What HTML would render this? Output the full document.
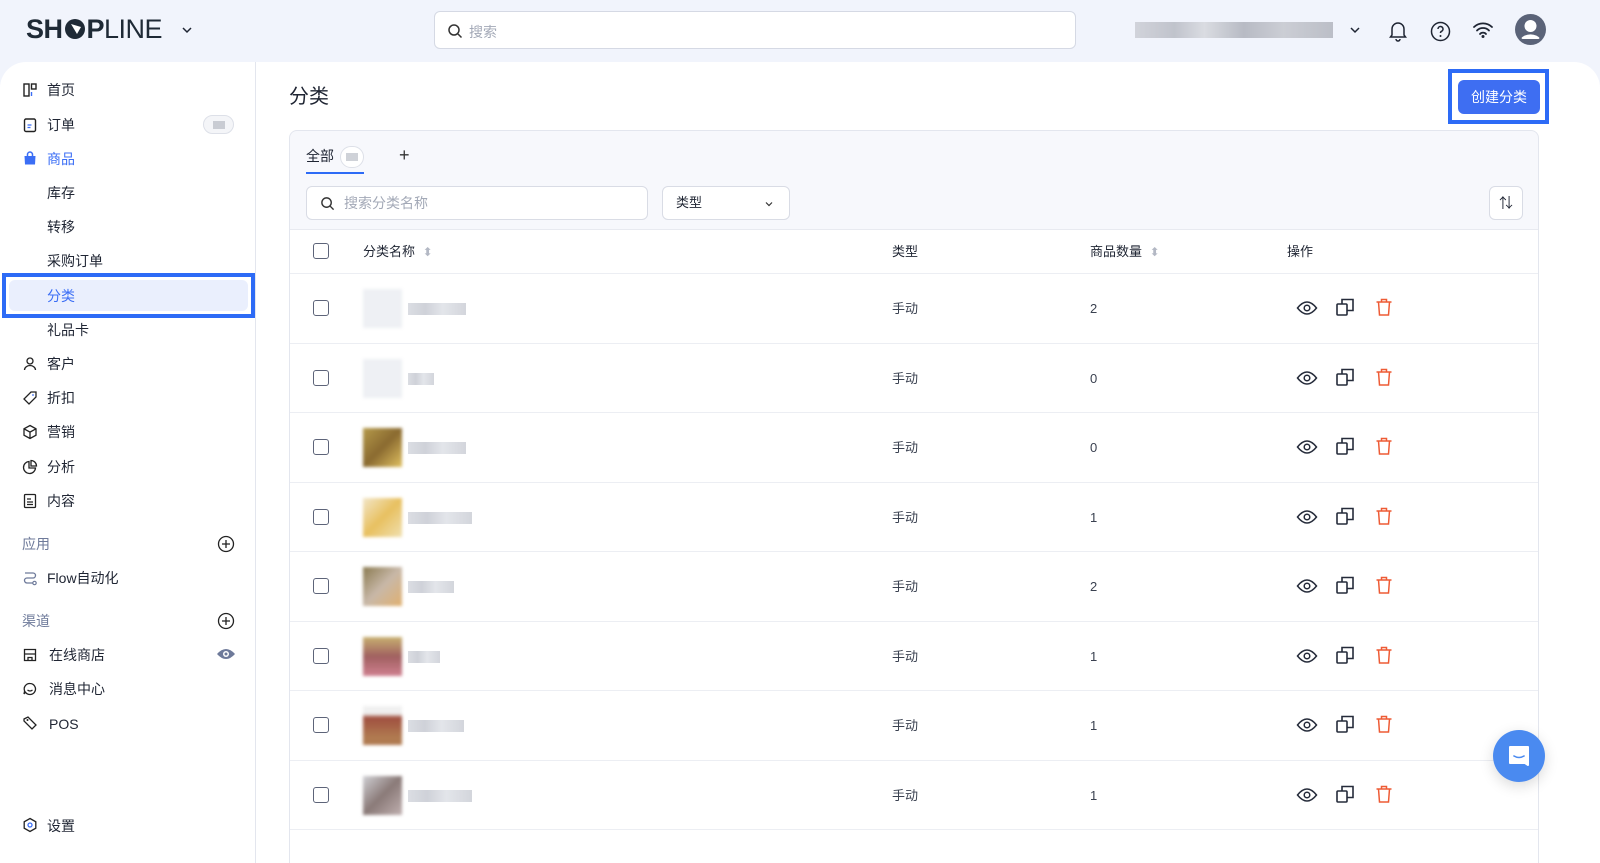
<!DOCTYPE html>
<html><head><meta charset="utf-8"><style>
*{box-sizing:border-box;margin:0;padding:0}
html,body{width:1600px;height:863px;overflow:hidden}
body{background:#f1f4fc;font-family:"Liberation Sans","Noto Sans CJK SC",sans-serif;color:#1f2533;position:relative}
.abs{position:absolute}
.logo{left:26px;top:14px;font-size:27px;font-weight:bold;letter-spacing:-0.5px;color:#1f2a36}
.logo span{font-weight:normal}
.search{left:434px;top:11px;width:642px;height:38px;border:1px solid #d5d9e4;border-radius:6px;background:#fff}
.search .ph{position:absolute;left:34px;top:10px;font-size:14px;color:#a3a9b7}
.panel{left:0;top:62px;width:1600px;height:801px;background:#fff;border-radius:26px 26px 0 0}
.side{left:0;top:62px;width:256px;height:801px;border-right:1px solid #e3e6ee}
.nav{position:absolute;left:47px;font-size:14px;color:#1f2533;line-height:18px}
.ico{position:absolute;left:22px;width:16px;height:16px}
.sec{position:absolute;left:22px;font-size:14px;color:#6e7a9a;line-height:18px}
.card{left:289px;top:130px;width:1250px;height:733px;background:#f7f8fc;border:1px solid #e3e6ee;border-bottom:none;border-radius:8px 8px 0 0;overflow:hidden}
.tbl{position:absolute;left:0;top:98px;width:1250px;height:635px;background:#fff;border-top:1px solid #e8eaf0}
.row{position:absolute;left:0;width:1250px;border-bottom:1px solid #eceef3}
.cb{position:absolute;left:23px;width:16px;height:16px;border:1.5px solid #5d6479;border-radius:3px;background:#fff}
.cell{position:absolute;font-size:13px;color:#3a4150;line-height:16px}
.blur{position:absolute;height:12px;background:linear-gradient(90deg,#d2d5dc,#c3c6cf 30%,#dcdfe5 60%,#c8cbd3);opacity:.8}
.th{position:absolute;left:73px;width:39px;height:39px;filter:blur(1.5px)}
</style></head><body>
<div class="abs logo">SH<svg width="24" height="22" viewBox="0 0 24 22" style="vertical-align:-2px"><circle cx="12" cy="11" r="10" fill="#1f2a36"/><path d="M8 6 L14 16 L18 9 Z" fill="#fff"/></svg>P<span>LINE</span></div>
<svg class="abs" style="left:181px;top:24px" width="12" height="12" viewBox="0 0 12 12"><path d="M2 4l4 4 4-4" stroke="#1f2533" stroke-width="1.5" fill="none"/></svg>
<div class="abs search"><svg style="position:absolute;left:12px;top:11px" width="16" height="16" viewBox="0 0 16 16"><circle cx="7" cy="7" r="5" stroke="#333" stroke-width="1.5" fill="none"/><path d="M11 11l3.5 3.5" stroke="#333" stroke-width="1.5"/></svg><div class="ph">搜索</div></div>
<div class="blur" style="left:1135px;top:22px;width:198px;height:16px;background:linear-gradient(90deg,#c9cbd2,#b4b7c0 20%,#d4d6db 35%,#a9acb6 55%,#c2c4cb 75%,#aeb1ba)"></div>
<svg class="abs" style="left:1349px;top:24px" width="12" height="12" viewBox="0 0 12 12"><path d="M2 4l4 4 4-4" stroke="#1f2533" stroke-width="1.5" fill="none"/></svg>
<svg class="abs" style="left:1388px;top:20px" width="20" height="22" viewBox="0 0 20 22"><path d="M4 15V9a6 6 0 0 1 12 0v6l1.5 2h-15z M8 19a2 2 0 0 0 4 0" stroke="#1f2533" stroke-width="1.5" fill="none"/></svg>
<svg class="abs" style="left:1430px;top:21px" width="21" height="21" viewBox="0 0 21 21"><circle cx="10.5" cy="10.5" r="9" stroke="#1f2533" stroke-width="1.5" fill="none"/><path d="M8 8a2.5 2.5 0 1 1 3.5 2.3c-.8.4-1 .9-1 1.7" stroke="#1f2533" stroke-width="1.5" fill="none"/><circle cx="10.5" cy="15" r="1" fill="#1f2533"/></svg>
<svg class="abs" style="left:1472px;top:21px" width="22" height="18" viewBox="0 0 22 18"><path d="M2 6a13 13 0 0 1 18 0M5 9.5a8.5 8.5 0 0 1 12 0M8 13a4 4 0 0 1 6 0" stroke="#1f2533" stroke-width="1.8" fill="none" stroke-linecap="round"/><circle cx="11" cy="15.5" r="1.5" fill="#1f2533"/></svg>
<svg class="abs" style="left:1515px;top:14px" width="31" height="31" viewBox="0 0 31 31"><circle cx="15.5" cy="15.5" r="15.5" fill="#5b6378"/><circle cx="15.5" cy="12" r="6" fill="#fff"/><path d="M5.5 25a11 8 0 0 1 20 0" fill="#fff"/><circle cx="15.5" cy="15.5" r="13.5" stroke="#5b6378" stroke-width="2" fill="none"/></svg>

<div class="abs panel"></div>
<div class="abs side"></div>
<svg class="ico" style="top:82px" viewBox="0 0 16 16"><rect x="2" y="2" width="5" height="12" stroke="#222" stroke-width="1.4" fill="none"/><rect x="9.5" y="2" width="4.5" height="5" stroke="#222" stroke-width="1.4" fill="none"/><path d="M9.5 10v4" stroke="#3b6ef5" stroke-width="1.4"/></svg><div class="nav" style="top:81px">首页</div>
<svg class="ico" style="top:117px" viewBox="0 0 16 16"><rect x="2.5" y="2" width="11" height="12.5" rx="1.5" stroke="#222" stroke-width="1.4" fill="none"/><path d="M5.5 8h4M5.5 10.5h3" stroke="#3b6ef5" stroke-width="1.3"/></svg><div class="nav" style="top:116px">订单</div>
<div class="abs" style="left:203px;top:115px;width:31px;height:19px;border:1px solid #dde0e8;border-radius:10px;background:#f4f5f8"><div style="margin:5px 9px;width:12px;height:8px;background:#c9ccd3"></div></div>
<svg class="ico" style="top:150px" viewBox="0 0 16 16"><path d="M2.5 6h11l-.5 8.5h-10z" fill="#3b6ef5"/><path d="M5.5 6V4.5a2.5 2.5 0 0 1 5 0V6" stroke="#3b6ef5" stroke-width="1.5" fill="none"/></svg><div class="nav" style="top:150px;color:#3b6ef5">商品</div>
<div class="nav" style="top:184px">库存</div>
<div class="nav" style="top:218px">转移</div>
<div class="nav" style="top:252px">采购订单</div>
<div class="abs" style="left:2px;top:273px;width:253px;height:45px;border:4px solid #2d6bf6;background:#fff"><div style="margin:3px;height:31px;background:#eaeffd;border-radius:6px"></div></div>
<div class="nav" style="top:287px;color:#3b6ef5">分类</div>
<div class="nav" style="top:321px">礼品卡</div>
<svg class="ico" style="top:356px" viewBox="0 0 16 16"><circle cx="8" cy="5" r="3" stroke="#222" stroke-width="1.3" fill="none"/><path d="M2.5 14a5.5 4.5 0 0 1 11 0" stroke="#222" stroke-width="1.3" fill="none"/></svg><div class="nav" style="top:355px">客户</div>
<svg class="ico" style="top:390px" viewBox="0 0 16 16"><path d="M9 2h5v5l-7 7-5-5z" stroke="#222" stroke-width="1.3" fill="none"/><circle cx="11" cy="5" r=".9" fill="#3b6ef5"/></svg><div class="nav" style="top:389px">折扣</div>
<svg class="ico" style="top:424px" viewBox="0 0 16 16"><path d="M8 1.5l6 3.3v6.4L8 14.5 2 11.2V4.8z M2 4.8l6 3.3 6-3.3M8 8.1v6.4" stroke="#222" stroke-width="1.3" fill="none"/></svg><div class="nav" style="top:423px">营销</div>
<svg class="ico" style="top:459px" viewBox="0 0 16 16"><path d="M7 2.5a6 6 0 1 0 6.5 6.5H7z" stroke="#222" stroke-width="1.3" fill="none"/><path d="M9 1.5a5.5 5.5 0 0 1 5.5 5.5H9z" stroke="#222" stroke-width="1.3" fill="none"/></svg><div class="nav" style="top:458px">分析</div>
<svg class="ico" style="top:493px" viewBox="0 0 16 16"><rect x="2.5" y="1.5" width="11" height="13" rx="1" stroke="#222" stroke-width="1.3" fill="none"/><path d="M5 6h4M5 9h6M5 11.5h6" stroke="#222" stroke-width="1.2"/></svg><div class="nav" style="top:492px">内容</div>
<div class="sec" style="top:535px">应用</div>
<svg class="abs" style="left:217px;top:535px" width="18" height="18" viewBox="0 0 18 18"><circle cx="9" cy="9" r="7.5" stroke="#222" stroke-width="1.3" fill="none"/><path d="M9 5v8M5 9h8" stroke="#222" stroke-width="1.3"/></svg>
<svg class="ico" style="top:570px" viewBox="0 0 16 16"><path d="M3 3h8a2.5 2.5 0 0 1 0 5H5a2.5 2.5 0 0 0 0 5h6" stroke="#6e7a9a" stroke-width="1.3" fill="none"/><circle cx="12.5" cy="13" r="1.7" stroke="#6e7a9a" stroke-width="1.2" fill="none"/></svg><div class="nav" style="top:569px">Flow自动化</div>
<div class="sec" style="top:612px">渠道</div>
<svg class="abs" style="left:217px;top:612px" width="18" height="18" viewBox="0 0 18 18"><circle cx="9" cy="9" r="7.5" stroke="#222" stroke-width="1.3" fill="none"/><path d="M9 5v8M5 9h8" stroke="#222" stroke-width="1.3"/></svg>
<svg class="ico" style="top:647px" viewBox="0 0 16 16"><path d="M2.5 2.5h11v11h-11zM2.5 7h11M6 13.5v-3h4v3" stroke="#222" stroke-width="1.3" fill="none"/></svg><div class="nav" style="top:646px;left:49px">在线商店</div>
<svg class="abs" style="left:216px;top:647px" width="20" height="14" viewBox="0 0 20 14"><path d="M1 7q9-10 18 0q-9 10-18 0z" fill="#6e7a9a"/><circle cx="10" cy="7" r="3" fill="#fff"/><circle cx="10" cy="7" r="1.5" fill="#6e7a9a"/></svg>
<svg class="ico" style="top:681px" viewBox="0 0 16 16"><path d="M8 2.5a5.5 5.5 0 1 1-4.5 8.7L2 13l.6-3A5.5 5.5 0 0 1 8 2.5z" stroke="#222" stroke-width="1.3" fill="none"/><path d="M5.5 9q2.5 2 5 0" stroke="#222" stroke-width="1.2" fill="none"/></svg><div class="nav" style="top:680px;left:49px">消息中心</div>
<svg class="ico" style="top:715px" viewBox="0 0 16 16"><path d="M2 4l4-2 8 8-4 4-8-8z" stroke="#222" stroke-width="1.3" fill="none"/><circle cx="5.5" cy="5" r="1" fill="#222"/></svg><div class="nav" style="top:715px;left:49px">POS</div>
<svg class="ico" style="top:817px" viewBox="0 0 16 16"><path d="M8 1.5l5.8 3.3v6.4L8 14.5 2.2 11.2V4.8z" stroke="#222" stroke-width="1.3" fill="none"/><circle cx="8" cy="8" r="2" stroke="#3b6ef5" stroke-width="1.3" fill="none"/></svg><div class="nav" style="top:817px">设置</div>

<div class="abs" style="left:289px;top:84px;font-size:20px;line-height:26px">分类</div>
<div class="abs" style="left:1448px;top:69px;width:101px;height:55px;border:4px solid #2d6bf6;background:#fff"></div>
<div class="abs" style="left:1458px;top:80px;width:82px;height:34px;background:#3e6ef2;border-radius:6px;color:#fff;font-size:14px;text-align:center;line-height:34px">创建分类</div>

<div class="abs card">
 <div style="position:absolute;left:16px;top:16px;font-size:14px;line-height:18px">全部</div>
 <div style="position:absolute;left:50px;top:15px;width:24px;height:22px;border:1px solid #dde0e8;border-radius:11px;background:#fff"><div style="margin:6px 5px;width:12px;height:8px;background:#cfd2d8"></div></div>
 <div style="position:absolute;left:16px;top:41px;width:58px;height:2px;background:#2d6bf6"></div>
 <div style="position:absolute;left:109px;top:13px;font-size:18px;color:#333;line-height:22px">+</div>
 <div style="position:absolute;left:16px;top:55px;width:342px;height:34px;border:1px solid #d9dce5;border-radius:6px;background:#fff"><svg style="position:absolute;left:13px;top:9px" width="15" height="15" viewBox="0 0 16 16"><circle cx="7" cy="7" r="5" stroke="#333" stroke-width="1.5" fill="none"/><path d="M11 11l3.5 3.5" stroke="#333" stroke-width="1.5"/></svg><span style="position:absolute;left:37px;top:7px;font-size:14px;color:#a3a9b7;line-height:18px">搜索分类名称</span></div>
 <div style="position:absolute;left:372px;top:55px;width:128px;height:34px;border:1px solid #d9dce5;border-radius:6px;background:#fff"><span style="position:absolute;left:13px;top:8px;font-size:13px;line-height:16px">类型</span><svg style="position:absolute;left:101px;top:12px" width="10" height="10" viewBox="0 0 10 10"><path d="M2 3.5l3 3 3-3" stroke="#333" stroke-width="1.2" fill="none"/></svg></div>
 <div style="position:absolute;left:1199px;top:55px;width:34px;height:34px;border:1px solid #d9dce5;border-radius:6px;background:#fff;font-size:14px;text-align:center;line-height:32px">⇅</div>
 <div class="tbl">
  <div class="row" style="top:0;height:44px"><div class="cb" style="top:13px"></div><div class="cell" style="left:73px;top:14px;color:#1f2533">分类名称 <span style="color:#b3b8c4;font-size:12px;margin-left:4px">⬍</span></div><div class="cell" style="left:602px;top:14px;color:#1f2533">类型</div><div class="cell" style="left:800px;top:14px;color:#1f2533">商品数量 <span style="color:#b3b8c4;font-size:12px;margin-left:4px">⬍</span></div><div class="cell" style="left:997px;top:14px;color:#1f2533">操作</div></div>
  ROWS
 </div>
</div>
<div class="abs" style="left:1493px;top:730px;width:52px;height:52px;border-radius:50%;background:#4a8af0;box-shadow:0 4px 14px rgba(0,0,0,.15)"><svg style="position:absolute;left:14px;top:14px" width="24" height="24" viewBox="0 0 24 24"><path d="M3 3h18v18l-3-2H3z" fill="#fff" stroke="#fff" stroke-linejoin="round" stroke-width="2"/><path d="M7 12q5 3 10 0" stroke="#4a8af0" stroke-width="1.6" fill="none" stroke-linecap="round"/></svg></div>
<script>
var th=["#eef0f4","#eef0f4","linear-gradient(135deg,#b59a4a,#8a6a30 50%,#e0c060)","linear-gradient(135deg,#f2e6c8,#e8c060 50%,#f0e0b0)","linear-gradient(135deg,#8a7a50,#c8b8a8 50%,#e0b070)","linear-gradient(180deg,#c8b070,#a06060 50%,#d08090)","linear-gradient(180deg,#f0f0f0 20%,#a05040 30%,#b07a50 80%)","linear-gradient(135deg,#d0d0d4,#8a7a78 50%,#c0b0b0)"];
var bw=[58,26,58,64,46,32,56,64],qty=[2,0,0,1,2,1,1,1];
var eye='<svg width="22" height="16" viewBox="0 0 22 16"><path d="M1.5 8q9.5-12 19 0q-9.5 12-19 0z" stroke="#252b3a" stroke-width="1.5" fill="none"/><circle cx="11" cy="8" r="2.8" stroke="#252b3a" stroke-width="1.5" fill="none"/></svg>';
var cp='<svg width="20" height="20" viewBox="0 0 20 20"><rect x="2" y="7" width="10" height="11" rx="1" stroke="#252b3a" stroke-width="1.6" fill="none"/><path d="M7 7V2.5h11v11h-6" stroke="#252b3a" stroke-width="1.6" fill="none"/></svg>';
var tr='<svg width="20" height="20" viewBox="0 0 20 20"><path d="M2.5 5h15M7.5 5V2.5h5V5M4.5 5l1 13h9l1-13" stroke="#ee5b35" stroke-width="1.5" fill="none"/></svg>';
var h='';for(var i=0;i<8;i++){var t=44+i*69.5;h+='<div class="row" style="top:'+t+'px;height:69.5px"><div class="cb" style="top:26px"></div><div class="th" style="top:15px;background:'+th[i]+'"></div><div class="blur" style="left:118px;top:29px;width:'+bw[i]+'px"></div><div class="cell" style="left:602px;top:27px">手动</div><div class="cell" style="left:800px;top:27px">'+qty[i]+'</div><div style="position:absolute;left:1006px;top:26px">'+eye+'</div><div style="position:absolute;left:1045px;top:23px">'+cp+'</div><div style="position:absolute;left:1084px;top:23px">'+tr+'</div></div>';}
document.querySelector('.tbl').innerHTML=document.querySelector('.tbl').innerHTML.replace('ROWS',h);
</script>
</body></html>
